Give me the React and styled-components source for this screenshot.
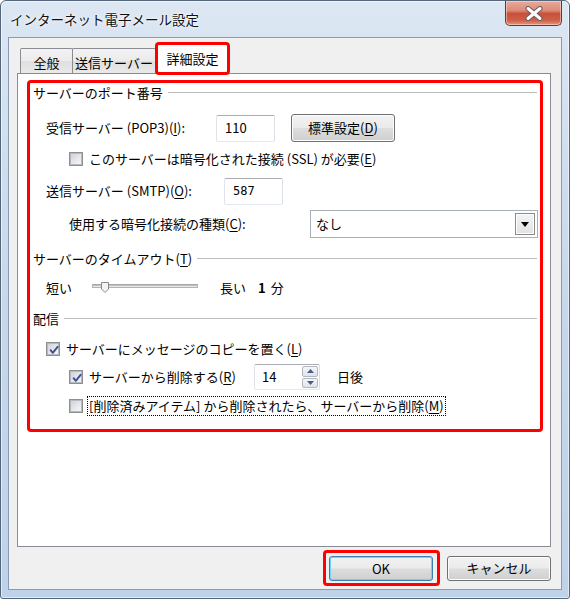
import React from 'react';
import styled, { createGlobalStyle } from 'styled-components';

const Global = createGlobalStyle`
  html, body { margin: 0; padding: 0; background: #ffffff; }
  body { font-family: "Noto Sans CJK JP", "Noto Sans", sans-serif; font-size: 13px; color: #000; }
  * { box-sizing: border-box; }
`;

const Window = styled.div`
  width: 570px;
  height: 599px;
  display: flex;
  flex-direction: column;
  border: 1px solid #56667a;
  border-radius: 6px 6px 3px 3px;
  background: linear-gradient(180deg, #dce7f3 0%, #d0deee 25%, #c6d7eb 55%, #bed2e9 100%);
  box-shadow: inset 0 0 0 1px rgba(255, 255, 255, 0.55);
  padding: 0 7px 8px 7px;
`;

const TitleBar = styled.div`
  height: 36px;
  display: flex;
  align-items: flex-start;
  justify-content: space-between;
`;

const Title = styled.div`
  margin: 9px 0 0 2px;
  font-size: 13.5px;
  line-height: 18px;
  color: #101010;
  text-shadow: 0 0 5px rgba(255, 255, 255, 0.95), 0 0 2px rgba(255, 255, 255, 0.9);
`;

const CloseButton = styled.div`
  width: 57px;
  height: 25px;
  border: 1px solid #74332a;
  border-top: none;
  border-radius: 0 0 5px 5px;
  background: linear-gradient(180deg, #e8ab9d 0%, #dc8a78 40%, #c8513b 52%, #cf5e47 80%, #e39980 100%);
  box-shadow: inset 0 0 0 1px rgba(255, 230, 220, 0.5);
  display: flex;
  align-items: center;
  justify-content: center;
`;

const Client = styled.div`
  flex: 1;
  display: flex;
  flex-direction: column;
  background: #f0f0f0;
  border: 1px solid #8a9bb1;
  padding: 0 10px 0 8px;
`;

const TabStrip = styled.div`
  height: 35px;
  display: flex;
  align-items: flex-end;
  padding-left: 4px;
`;

const Tab = styled.div`
  position: relative;
  width: ${(p) => p.$w}px;
  height: ${(p) => (p.$active ? 33 : 25)}px;
  margin-left: -1px;
  margin-bottom: ${(p) => (p.$active ? -2 : 0)}px;
  z-index: ${(p) => (p.$active ? 2 : 1)};
  display: flex;
  align-items: center;
  justify-content: center;
  padding-top: ${(p) => (p.$active ? 0 : 3)}px;
  line-height: 18px;
  border: ${(p) => (p.$active ? '3px solid #ff0000' : '1px solid #898c95')};
  border-bottom: ${(p) => (p.$active ? '3px solid #ff0000' : 'none')};
  border-radius: ${(p) => (p.$active ? '4px' : '2px 2px 0 0')};
  background: ${(p) => (p.$active ? '#ffffff' : 'linear-gradient(180deg, #f3f3f3 0%, #ebebeb 50%, #dfdfdf 51%, #e9e9e9 100%)')};
`;

const Panel = styled.div`
  height: 474px;
  background: #ffffff;
  border: 1px solid #898c95;
  display: flex;
  flex-direction: column;
`;

const Highlight = styled.div`
  margin: 6px 7px 0 9px;
  border: 3px solid #ff0000;
  border-radius: 4px;
  padding: 0 3px 12px 0;
  display: flex;
  flex-direction: column;
`;

const GroupHeader = styled.div`
  height: 20px;
  margin-top: ${(p) => p.$mt}px;
  padding-left: 3px;
  display: flex;
  align-items: center;
  gap: 5px;
  line-height: 20px;
  white-space: nowrap;
  &::after {
    content: '';
    flex: 1;
    height: 0;
    border-top: 1px solid #bcbcbc;
    border-bottom: 1px solid #ffffff;
  }
`;

const Row = styled.div`
  height: ${(p) => p.$h}px;
  margin-top: ${(p) => p.$mt}px;
  padding-left: ${(p) => p.$indent}px;
  display: flex;
  align-items: center;
  line-height: 20px;
  white-space: nowrap;
`;

const Label = styled.span`
  width: ${(p) => (p.$w ? `${p.$w}px` : 'auto')};
  flex: none;
`;

const TextBox = styled.div`
  width: 59px;
  height: 27px;
  flex: none;
  display: flex;
  align-items: center;
  padding-left: 8px;
  background: #ffffff;
  border: 1px solid;
  border-color: #abadb3 #dbdfe6 #e3e9ef #e2e3ea;
  border-radius: 2px;
  font-family: ${(p) => (p.$mono ? '"DejaVu Sans Mono", monospace' : 'inherit')};
  font-size: ${(p) => (p.$mono ? '12px' : '13px')};
`;

const PushButton = styled.div`
  width: 104px;
  height: ${(p) => p.$h || 25}px;
  margin-left: ${(p) => p.$ml || 0}px;
  flex: none;
  display: flex;
  align-items: center;
  justify-content: center;
  border: 1px solid ${(p) => (p.$default ? '#3c7fb1' : '#707070')};
  border-radius: 3px;
  background: linear-gradient(180deg, #f2f2f2 0%, #ebebeb 48%, #dddddd 52%, #cfcfcf 100%);
  box-shadow: inset 0 0 0 1px ${(p) => (p.$default ? '#6fd5f7' : '#fcfcfc')};
  line-height: 18px;
`;

const OkFrame = styled.div`
  border: 3px solid #ff0000;
  border-radius: 4px;
  padding: 3px 4px 2px 3px;
  display: flex;
`;

const Select = styled.div`
  width: 228px;
  height: 28px;
  flex: none;
  display: flex;
  align-items: center;
  justify-content: space-between;
  padding: 2px 2px 2px 5px;
  border: 1px solid #a9b0b8;
  background: #ffffff;
`;

const DropButton = styled.div`
  width: 20px;
  height: 22px;
  display: flex;
  align-items: center;
  justify-content: center;
  border: 1px solid #8a8a8a;
  background: linear-gradient(180deg, #f4f4f4 0%, #e2e2e2 100%);
  box-shadow: inset 0 0 0 1px #ffffff;
`;

const CheckBox = styled.span`
  position: relative;
  width: 14px;
  height: 14px;
  flex: none;
  margin-right: ${(p) => p.$mr}px;
  border: 1px solid #8e8f8f;
  background: #f5f5f5;
  display: flex;
  align-items: center;
  justify-content: center;
  &::before {
    content: '';
    width: 10px;
    height: 10px;
    border: 1px solid #b6b9bf;
    background: linear-gradient(135deg, #cfd3d8 0%, #e8e9eb 60%, #f7f7f7 100%);
  }
  svg {
    position: absolute;
    left: 1px;
    top: 1px;
  }
`;

const FocusText = styled.span`
  outline: 1px dotted #000000;
  outline-offset: -1px;
  padding: 0 2px;
  line-height: 20px;
`;

const SliderBox = styled.div`
  width: 106px;
  height: 14px;
  flex: none;
  display: flex;
`;

const Spin = styled.div`
  width: 66px;
  height: 26px;
  flex: none;
  display: flex;
  background: #ffffff;
  border: 1px solid;
  border-color: #abadb3 #dbdfe6 #e3e9ef #e2e3ea;
  border-radius: 2px;
`;

const SpinText = styled.div`
  flex: 1;
  display: flex;
  align-items: center;
  padding-left: 7px;
`;

const SpinButtons = styled.div`
  width: 18px;
  display: flex;
  flex-direction: column;
  padding: 1px;
  gap: 1px;
`;

const SpinArrow = styled.div`
  flex: 1;
  display: flex;
  align-items: center;
  justify-content: center;
  border: 1px solid #b3b8bf;
  border-radius: 2px;
  background: linear-gradient(180deg, #f4f6f8 0%, #e0e4ea 100%);
`;

const Bold = styled.span`
  font-weight: 700;
  margin-left: ${(p) => p.$ml}px;
`;

const Gap = styled.span`
  display: inline-block;
  width: ${(p) => p.$w}px;
  flex: none;
`;

const ButtonBar = styled.div`
  flex: 1;
  display: flex;
  justify-content: flex-end;
  align-items: center;
  gap: 7px;
`;

const Tick = () => (
  <svg width="12" height="12" viewBox="0 0 12 12">
    <path d="M2.6 6.2 L4.8 8.8 L9.6 2.8" fill="none" stroke="#3d4f9a" strokeWidth="1.9" strokeLinecap="round" strokeLinejoin="round" />
  </svg>
);

const Check = ({ checked, mr = 6 }) => (
  <CheckBox $mr={mr}>{checked && <Tick />}</CheckBox>
);

const U = styled.span`
  text-decoration: underline;
  text-underline-offset: 2px;
`;

export default function App() {
  return (
    <>
      <Global />
      <Window>
        <TitleBar>
          <Title>インターネット電子メール設定</Title>
          <CloseButton>
            <svg width="20" height="15" viewBox="0 0 20 15">
              <path d="M4 2.5 L16 12.5 M16 2.5 L4 12.5" stroke="#6a5c5a" strokeWidth="5" strokeLinecap="round" />
              <path d="M4 2.5 L16 12.5 M16 2.5 L4 12.5" stroke="#ffffff" strokeWidth="3" strokeLinecap="round" />
            </svg>
          </CloseButton>
        </TitleBar>
        <Client>
          <TabStrip>
            <Tab $w={53}>全般</Tab>
            <Tab $w={84}>送信サーバー</Tab>
            <Tab $w={75} $active>詳細設定</Tab>
          </TabStrip>
          <Panel>
            <Highlight>
              <GroupHeader $mt={0}><span>サーバーのポート番号</span></GroupHeader>
              <Row $mt={11} $h={28} $indent={16}>
                <Label $w={170}>受信サーバー (POP3)(<U>I</U>):</Label>
                <TextBox>110</TextBox>
                <PushButton $ml={16} $h={28}>標準設定(<U>D</U>)</PushButton>
              </Row>
              <Row $mt={6} $h={22} $indent={39}>
                <Check />
                <Label>このサーバーは暗号化された接続 (SSL) が必要(<U>E</U>)</Label>
              </Row>
              <Row $mt={7} $h={28} $indent={16}>
                <Label $w={178}>送信サーバー (SMTP)(<U>O</U>):</Label>
                <TextBox $mono>587</TextBox>
              </Row>
              <Row $mt={5} $h={28} $indent={39}>
                <Label $w={241}>使用する暗号化接続の種類(<U>C</U>):</Label>
                <Select>
                  <span>なし</span>
                  <DropButton>
                    <svg width="8" height="5" viewBox="0 0 8 5">
                      <path d="M0 0 H8 L4 5 Z" fill="#000" />
                    </svg>
                  </DropButton>
                </Select>
              </Row>
              <GroupHeader $mt={11}><span>サーバーのタイムアウト(<U>T</U>)</span></GroupHeader>
              <Row $mt={8} $h={22} $indent={16}>
                <Label $w={46}>短い</Label>
                <SliderBox>
                  <svg width="106" height="14" viewBox="0 0 106 14">
                    <rect x="0.5" y="3.5" width="105" height="3" fill="#e7e7e7" stroke="#b4b4b4" />
                    <line x1="1" y1="4" x2="105" y2="4" stroke="#9a9a9a" />
                    <path d="M9.5 1.5 H16.5 V8 L13 11.5 L9.5 8 Z" fill="#f4f4f4" stroke="#8a8a8a" />
                  </svg>
                </SliderBox>
                <Gap $w={22} />
                <span>長い</span>
                <Bold $ml={12}>1</Bold>
                <Gap $w={5} />
                <span>分</span>
              </Row>
              <GroupHeader $mt={10}><span>配信</span></GroupHeader>
              <Row $mt={9} $h={22} $indent={16}>
                <Check checked />
                <Label>サーバーにメッセージのコピーを置く(<U>L</U>)</Label>
              </Row>
              <Row $mt={4} $h={26} $indent={39}>
                <Check checked />
                <Label $w={165}>サーバーから削除する(<U>R</U>)</Label>
                <Spin>
                  <SpinText>14</SpinText>
                  <SpinButtons>
                    <SpinArrow>
                      <svg width="7" height="4" viewBox="0 0 7 4"><path d="M0 4 H7 L3.5 0 Z" fill="#4a5d86" /></svg>
                    </SpinArrow>
                    <SpinArrow>
                      <svg width="7" height="4" viewBox="0 0 7 4"><path d="M0 0 H7 L3.5 4 Z" fill="#4a5d86" /></svg>
                    </SpinArrow>
                  </SpinButtons>
                </Spin>
                <Gap $w={17} />
                <span>日後</span>
              </Row>
              <Row $mt={5} $h={22} $indent={39}>
                <Check mr={4} />
                <FocusText>[削除済みアイテム] から削除されたら、サーバーから削除(<U>M</U>)</FocusText>
              </Row>
            </Highlight>
          </Panel>
          <ButtonBar>
            <OkFrame>
              <PushButton $default>OK</PushButton>
            </OkFrame>
            <PushButton>キャンセル</PushButton>
          </ButtonBar>
        </Client>
      </Window>
    </>
  );
}
